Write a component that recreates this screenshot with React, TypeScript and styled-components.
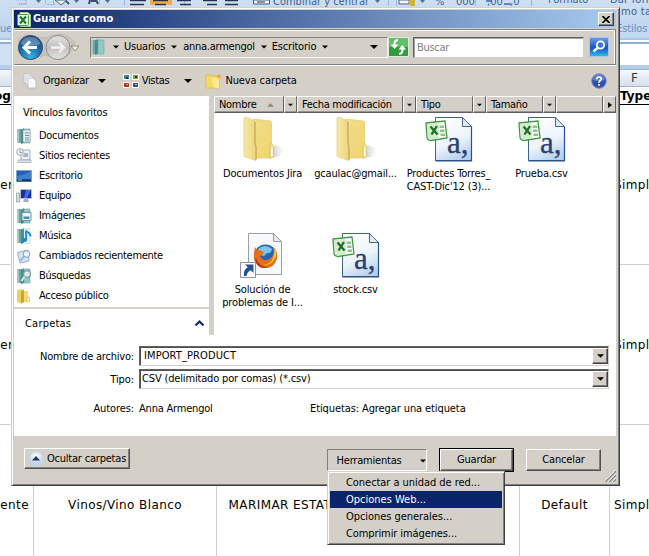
import React from "react";
import styled, { createGlobalStyle } from "styled-components";

const Global = createGlobalStyle`
  * { box-sizing: border-box; }
  html, body { margin: 0; padding: 0; overflow: hidden; }
  body {
    font-family: "DejaVu Sans Condensed", "DejaVu Sans", sans-serif;
    font-stretch: condensed;
    font-size: 11px;
    line-height: 14px;
    color: #000;
  }
  svg { display: block; flex: none; }
`;

const face = "#d4d0c8";

/* ---------- text ---------- */
const Text = styled.span<{ $track?: number; $bold?: boolean; $color?: string; $ml?: number }>`
  white-space: pre;
  letter-spacing: ${(p) => p.$track ?? -0.1}px;
  font-weight: ${(p) => (p.$bold ? 700 : 400)};
  color: ${(p) => p.$color ?? "inherit"};
  margin-left: ${(p) => p.$ml ?? 0}px;
`;

/* ---------- spreadsheet behind the dialog ---------- */
const Screen = styled.div`
  position: relative;
  width: 649px;
  height: 556px;
  overflow: hidden;
  background: #fff;
  display: flex;
  flex-direction: column;
`;

const Ribbon = styled.div`
  flex: none;
  height: 40px;
  background: linear-gradient(#cfdff3, #c3d8f0 60%, #c1d9f1 92%, #9fc0e6);
  color: #3e5e93;
  display: grid;
  grid-template-columns: 1fr 106px;
  overflow: hidden;
`;

const RibbonTools = styled.div`
  display: flex;
  height: 9px;
  overflow: hidden;
  position: relative;
`;

const RibbonCaption = styled.div`
  position: absolute;
  left: 0;
  top: 22px;
  color: #6b8fc0;
`;

const RibbonStyles = styled.div`
  display: grid;
  grid-template-columns: 63px 43px;
  grid-template-rows: 12px 17px 16px;
  margin-top: -7px;
  line-height: 14px;
  white-space: nowrap;
`;

const FormulaBar = styled.div`
  flex: none;
  height: 27px;
  margin-top: 2px;
  border-top: 2px solid #8db0dc;
  border-bottom: 4px solid #b5cdec;
  background: linear-gradient(90deg, #cfe0f5 0 11px, #fff 11px);
`;

const ColumnHeads = styled.div`
  flex: none;
  height: 18px;
  display: grid;
  grid-template-columns: 609px 40px;
  background: linear-gradient(#f5f8fc, #d5dfec);
  border-top: 1px solid #9eb6ce;
  border-bottom: 1px solid #9eb6ce;
  font: 12px/16px "DejaVu Sans", sans-serif;
  color: #27413e;
  & > :last-child { padding-left: 22px; }
`;

const SheetRow = styled.div<{ $head?: boolean }>`
  flex: none;
  height: ${(p) => (p.$head ? 18 : 160)}px;
  display: grid;
  grid-template-columns: 34px 183px 303px 90px 60px;
  border-bottom: 1px solid ${(p) => (p.$head ? "#000" : "#d0d0d4")};
  font: ${(p) => (p.$head ? "bold 12px" : "12px")} "DejaVu Sans", sans-serif;
  letter-spacing: ${(p) => (p.$head ? 0 : 0.4)}px;
`;

const Cell = styled.div<{ $align?: string; $pad?: number; $shift?: number }>`
  display: flex;
  align-items: center;
  justify-content: ${(p) => p.$align ?? "center"};
  padding-left: ${(p) => p.$pad ?? 0}px;
  padding-right: ${(p) => p.$shift ?? 0}px;
  border-right: 1px solid #d0d0d4;
  white-space: nowrap;
  overflow: hidden;
`;

const CutOff = styled.span`
  margin-left: -6px;
`;

/* ---------- dialog ---------- */
const Dialog = styled.div`
  position: absolute;
  left: 11px;
  top: 7px;
  width: 609px;
  height: 479px;
  background: ${face};
  border: 1px solid;
  border-color: ${face} #404040 #404040 ${face};
  box-shadow: inset 1px 1px #fff, inset -1px -1px #808080;
  padding: 2px 3px 2px 2px;
  display: flex;
  flex-direction: column;
`;

const TitleBar = styled.div`
  flex: none;
  height: 18px;
  display: flex;
  align-items: center;
  padding: 0 2px 0 3px;
  background: linear-gradient(90deg, #0a246a, #a6caf0);
`;

const CloseButton = styled.button`
  margin-left: auto;
  width: 16px;
  height: 14px;
  padding: 0;
  display: grid;
  place-items: center;
  background: ${face};
  border: 1px solid;
  border-color: #fff #404040 #404040 #fff;
  box-shadow: inset -1px -1px #808080;
`;

const NavBar = styled.div`
  flex: none;
  height: 36px;
  margin-top: 1px;
  display: flex;
  align-items: center;
  border: 1px solid;
  border-color: #808080 #808080 #808080 #d4d0c8;
  box-shadow: inset 0 1px #fff, 0 1px #fff, inset -1px 0 #fff;
  padding-left: 2px;
`;

const AddressBar = styled.div`
  width: 298px;
  height: 21px;
  margin-left: 10px;
  display: flex;
  align-items: center;
  border: 1px solid;
  border-color: #808080 #f4f2ee #f4f2ee #808080;
  & > svg:first-child { margin-left: -1px; }
  & > svg + svg { margin-left: 7px; }
`;

const SearchField = styled.div`
  width: 171px;
  height: 21px;
  margin-left: 4px;
  padding: 3px 0 0 3px;
  background: #fff;
  border: 1px solid;
  border-color: #606060 ${face} ${face} #606060;
  box-shadow: inset 1px 1px #a0a0a0;
  color: #808080;
`;

const Toolbar = styled.div`
  flex: none;
  height: 31px;
  display: flex;
  align-items: center;
  padding: 0 9px 0 9px;
`;

const HelpSlot = styled.div`
  margin-left: auto;
`;

const Panes = styled.div`
  flex: none;
  height: 239px;
  display: grid;
  grid-template-columns: 195px 5px 1fr;
`;

const Sidebar = styled.div`
  background: #fff;
  display: flex;
  flex-direction: column;
  padding-top: 10px;
`;

const LinkRow = styled.div`
  height: 20px;
  display: flex;
  align-items: center;
  padding-left: 2px;
  & > svg { margin-right: 7px; }
`;

const LinksTitle = styled.div`
  height: 20px;
  padding-left: 9px;
`;

const FoldersBar = styled.div`
  margin-top: auto;
  height: 28px;
  padding: 8px 4px 0 11px;
  display: flex;
  justify-content: space-between;
  border-top: 2px solid ${face};
`;

const Listing = styled.div`
  background: #fff;
  display: flex;
  flex-direction: column;
`;

const HeaderRow = styled.div`
  flex: none;
  height: 17px;
  display: grid;
  grid-template-columns: 70px 13px 106px 13px 57px 13px 57px 13px 47px 13px;
`;

const HeadCell = styled.div<{ $menu?: boolean }>`
  display: flex;
  align-items: center;
  justify-content: ${(p) => (p.$menu ? "center" : "flex-start")};
  padding-left: ${(p) => (p.$menu ? 0 : 4)}px;
  padding-top: 1px;
  background: ${face};
  border: 1px solid;
  border-color: #fff #606060 #606060 #fff;
  box-shadow: inset 0 -1px #9a9790;
  & > span + svg { margin-left: 10px; }
`;

const Files = styled.div`
  display: grid;
  grid-template-columns: repeat(4, 93px);
  grid-template-rows: 116px 100px;
  padding: 3px 0 0 2px;
`;

const FileItem = styled.div`
  display: flex;
  flex-direction: column;
  align-items: center;
  text-align: center;
  line-height: 13px;
  & > svg { margin-bottom: 3px; }
`;

const Fields = styled.div`
  flex: none;
  height: 101px;
  background: #fff;
  display: grid;
  grid-template-columns: 120px 470px;
  grid-template-rows: 23px 25px 29px;
  column-gap: 5px;
  padding-top: 11px;
`;

const FieldLabel = styled.div<{ $top?: number }>`
  text-align: right;
  padding-top: ${(p) => p.$top ?? 4}px;
`;

const Combo = styled.div<{ $pad: number }>`
  height: 20px;
  display: flex;
  align-items: center;
  justify-content: space-between;
  padding-left: ${(p) => p.$pad}px;
  border: 1px solid;
  border-color: #606060 ${face} ${face} #606060;
  box-shadow: inset 1px 1px #505050;
`;

const ComboButton = styled.div`
  width: 16px;
  height: 16px;
  display: grid;
  place-items: center;
  background: ${face};
  border: 1px solid;
  border-color: #fff #404040 #404040 #fff;
  box-shadow: inset -1px -1px #808080;
`;

const Meta = styled.div`
  display: grid;
  grid-template-columns: 171px 1fr;
  align-items: center;
`;

const Footer = styled.div`
  flex: 1;
  position: relative;
  display: flex;
  align-items: flex-start;
  padding: 12px 0 0 10px;
`;

const Button = styled.button<{ $w: number; $h?: number; $ml?: number; $mt?: number; $default?: boolean; $pressed?: boolean }>`
  width: ${(p) => p.$w}px;
  height: ${(p) => p.$h ?? 22}px;
  margin: ${(p) => p.$mt ?? 1}px 0 0 ${(p) => p.$ml ?? 0}px;
  padding: ${(p) => (p.$pressed ? "2px 0 0" : 0)};
  display: flex;
  align-items: center;
  justify-content: center;
  font: inherit;
  color: #000;
  background: ${face};
  border: 1px solid;
  border-color: ${(p) => (p.$pressed ? "#808080 #fff #fff #808080" : "#fff #505050 #505050 #fff")};
  box-shadow: ${(p) => (p.$pressed ? "none" : "inset -1px -1px #808080")};
  outline: ${(p) => (p.$default ? "1px solid #000" : "none")};
`;

const Grip = styled.div`
  position: absolute;
  right: 0;
  bottom: 1px;
`;

const Menu = styled.div`
  position: absolute;
  left: 327px;
  top: 471px;
  width: 178px;
  height: 74px;
  padding: 2px;
  background: ${face};
  border: 1px solid;
  border-color: ${face} #404040 #404040 ${face};
  box-shadow: inset 1px 1px #fff, inset -1px -1px #808080;
`;

const MenuItem = styled.div<{ $active?: boolean }>`
  height: 17px;
  padding: 1px 0 0 16px;
  line-height: 15px;
  background: ${(p) => (p.$active ? "#0a246a" : "transparent")};
  color: ${(p) => (p.$active ? "#fff" : "#000")};
`;

/* ---------- icons ---------- */
const Down = ({ w = 7, c = "#000" }: { w?: number; c?: string }) => (
  <svg width={w} height={4} viewBox="0 0 8 4"><path d="M0 0h8L4 4z" fill={c} /></svg>
);

const ExcelIcon = () => (
  <svg width="14" height="15" viewBox="0 0 14 15">
    <path d="M3 .5h8l2.500 2.500v11.500H3z" fill="#f2faf0" stroke="#a5cf9e" />
    <rect x=".5" y="2.500" width="11" height="11" rx="1" fill="#e6f3e2" stroke="#4c9a48" />
    <path d="M3 4.500 9 11.500M9 4.500 3 11.500" stroke="#1f7a2e" strokeWidth="2.200" />
  </svg>
);

const NavArrows = () => (
  <svg width="63" height="28" viewBox="0 0 63 28">
    <defs>
      <radialGradient id="back" cx=".5" cy=".9" r=".9">
        <stop offset="0" stopColor="#35b5ea" /><stop offset=".5" stopColor="#1b6fae" /><stop offset="1" stopColor="#0f3c78" />
      </radialGradient>
      <linearGradient id="fwd" x2="0" y2="1">
        <stop offset="0" stopColor="#e4e3e1" /><stop offset=".5" stopColor="#c2c1bf" /><stop offset="1" stopColor="#e4e3e0" />
      </linearGradient>
    </defs>
    <path d="M2 7Q6 1 13 2Q22 5 30 5Q35 1 44 1Q52 2 58 10L53 20Q48 27 41 26L28 22L13 27Q4 26 1 18Z" fill="#c6c4bf" stroke="#b2b0ab" strokeWidth=".6" />
    <circle cx="13.500" cy="14.500" r="12" fill="url(#back)" stroke="#34516f" />
    <path d="M3.500 11a10.500 10.500 0 0 1 20 0Q13 15 3.500 11z" fill="#fff" opacity=".3" />
    <path d="M13 8.500 7 14.500l6 6M8 14.500h12" fill="none" stroke="#fff" strokeWidth="3" />
    <circle cx="41" cy="14.500" r="12" fill="url(#fwd)" stroke="#8e8e8e" />
    <path d="M42 9.500l5 5-5 5M34 14.500h12" fill="none" stroke="#f0f0f0" strokeWidth="2.400" />
    <path d="M54 13h8l-4 5z" fill="#f2f1ef" stroke="#77756f" strokeWidth=".8" />
  </svg>
);

const Binder = ({ kind }: { kind?: string }) => (
  <svg width={16} height={16} viewBox="0 0 16 16">
    <path d="M1 1h5v14H1z" fill="#6ba69e" />
    <path d="M1 1h2v14H1z" fill="#a3c8c1" />
    <path d="M5 2l3-2v15l-3 1z" fill="#468d88" />
    <path d="M8 1h6v14H8z" fill="#93c8c8" stroke="#6fa3a5" strokeWidth=".6" />
    {kind === "doc" && <><path d="M7 2h7v12H7z" fill="#e6f0f5" stroke="#7f9fae" strokeWidth=".6" /><path d="M9 5h4M9 7.500h4M9 10h4M9 12h4" stroke="#6b93a8" /></>}
    {kind === "image" && <><path d="M6 4.500h9v8H6z" fill="#eef6fa" stroke="#6f97a5" /><path d="M7.500 8.500h6v2.500h-6z" fill="#3f92b8" /></>}
    {kind === "music" && <><path d="M8 1h7v14H8z" fill="#e2f0f6" /><path d="M10 12V2.500c1 2.500 5 2 4.500 6" fill="none" stroke="#1688d8" strokeWidth="1.800" /><ellipse cx="8.700" cy="12" rx="2.300" ry="1.900" fill="#1688d8" /></>}
    {kind === "search" && <><circle cx="11" cy="6" r="3.400" fill="#deedf5" stroke="#7295b5" strokeWidth="1.200" /><path d="M8.500 8.500 5.500 13" stroke="#d8e4f0" strokeWidth="2" /></>}
  </svg>
);

const RecentIcon = () => (
  <svg width="16" height="16" viewBox="0 0 16 16">
    <path d="M5 2h9v10H5z" fill="#edf1f5" stroke="#a5afb9" /><path d="M2 12h13v2.500H2z" fill="#dde3e9" stroke="#a0a8b0" strokeWidth=".7" />
    <path d="M8 5h4v4H7z" fill="#9fb6cb" /><circle cx="4" cy="4" r="3.300" fill="#f6f8fa" stroke="#9ca8a8" /><path d="M4 2v2.500h2" fill="none" stroke="#777" strokeWidth=".8" />
  </svg>
);
const DesktopIcon = () => (
  <svg width="16" height="16" viewBox="0 0 16 16">
    <path d="M.5 2.500h15v11H.5z" fill="#275fb5" stroke="#7da2c8" /><path d="M1 8Q9 7 15 3v8H1z" fill="#4a8dd4" opacity=".7" /><path d="M1 11.500h14v2H1z" fill="#17345f" /><path d="M2 12h4" stroke="#7fd2a0" />
  </svg>
);
const ComputerIcon = () => (
  <svg width="16" height="16" viewBox="0 0 16 16">
    <path d="M4.500 1.500h11v9h-11z" fill="#1a2ea5" stroke="#b7bec8" /><path d="M10 2h5L11 10H8z" fill="#3d6be0" /><path d="M8 11h4l1 3H7z" fill="#a9afb8" /><path d="M.5 5h3v9h-3z" fill="#d9dde2" stroke="#8b929b" strokeWidth=".7" />
  </svg>
);
const ChangedIcon = () => (
  <svg width="16" height="16" viewBox="0 0 16 16">
    <path d="M1.500 4.500 12 2l1 11-9 2z" fill="#d3e3f5" stroke="#93afd2" /><circle cx="10.500" cy="6" r="3.300" fill="#edf5fc" stroke="#7f9cc4" /><path d="M8 8.500 4.500 12.500" stroke="#8ba8ce" strokeWidth="1.600" />
  </svg>
);
const SmallFolder = () => (
  <svg width="16" height="16" viewBox="0 0 16 16">
    <path d="M1 2l5-1 2 1v12l-3 1.500L1 14z" fill="#ecd062" /><path d="M5 3l3-1v12l-3 1.500z" fill="#c9a632" /><path d="M8 3h4v11H8z" fill="#f2d976" /><path d="M11 9h2.500v5H11z" fill="#f9eeb6" stroke="#d4b451" strokeWidth=".5" />
  </svg>
);
const OrganizeIcon = () => (
  <svg width="15" height="16" viewBox="0 0 15 16">
    <g fill="#f8fafc" stroke="#b5bbc3" strokeWidth=".8"><path d="M1 1h7v9H1z" /><path d="M3 3h7v9H3z" /><path d="M5 5h5l3 3v7H5z" /></g>
  </svg>
);
const ViewsIcon = () => (
  <svg width="16" height="14" viewBox="0 0 16 14">
    <g fill="#fff"><path d="M0 0h7v6H0zM9 0h7v6H9zM0 8h7v6H0zM9 8h7v6H9z" /></g>
    <path d="M1 1h5v4H1z" fill="#2d8d91" /><path d="M10 1h5v4h-5z" fill="#76a72f" /><path d="M1 9h5v4H1z" fill="#b03428" /><path d="M10 9h5v4h-5z" fill="#3f4e8e" /><path d="M3 3h2v2H3zM12 2h2v2h-2z" fill="#243c2f" /><path d="M3 10h2v1H3zM12 10h2v1h-2z" fill="#e6b15b" />
  </svg>
);
const NewFolderIcon = () => (
  <svg width="17" height="16" viewBox="0 0 17 16">
    <path d="M1 2h5l1 1h7v12H1z" fill="#f5d967" stroke="#d9b440" strokeWidth=".7" /><path d="M6 5h8v10H9z" fill="#fbe891" /><path d="M14 1v5M11.500 3.500h5M12.300 1.800l3.400 3.400M15.700 1.800l-3.400 3.400" stroke="#efa42a" strokeWidth=".8" />
  </svg>
);
const RefreshIcon = () => (
  <svg width="21" height="20" viewBox="0 0 21 20">
    <path d="M.5.500h20v19H.500z" fill="#2f9d3c" stroke="#dcebdc" /><path d="M1 1h19v9H1z" fill="#62bd68" />
    <path d="M10 3Q6 3.500 6.500 8" fill="none" stroke="#fff" strokeWidth="2" />
    <path d="M2.800 7.500h7.600L6.600 12z" fill="#fff" />
    <path d="M11 17Q15 16.500 14.500 12" fill="none" stroke="#fff" strokeWidth="2" />
    <path d="M10.600 12.500h7.600L14.400 8z" fill="#fff" />
  </svg>
);
const SearchIcon = () => (
  <svg width="20" height="20" viewBox="0 0 20 20">
    <defs><linearGradient id="sg" x2="0" y2="1"><stop offset="0" stopColor="#6aa0e8" /><stop offset=".55" stopColor="#1e4fc0" /><stop offset="1" stopColor="#25c4ee" /></linearGradient></defs>
    <rect x=".5" y=".5" width="19" height="19" rx="1" fill="url(#sg)" stroke="#a9c5ec" />
    <circle cx="11.500" cy="8" r="3.700" fill="#3a78dc" stroke="#fff" strokeWidth="1.800" /><path d="M9 10.500 4.500 14.500" stroke="#fff" strokeWidth="2.400" />
  </svg>
);
const HelpIcon = () => (
  <svg width="16" height="16" viewBox="0 0 16 16">
    <circle cx="8" cy="8" r="7.300" fill="#2f52ae" stroke="#7e90c4" /><path d="M2 7a6 6 0 0 1 12 0Q8 9 2 7z" fill="#7f9ee0" opacity=".6" />
    <path d="M5.700 6.200c0-3 4.800-2.800 4.600-.2C10.200 7.600 8 7.500 8 9.700M8 11v1.700" fill="none" stroke="#fff" strokeWidth="1.700" />
  </svg>
);

const FolderIcon = () => (
  <svg width="48" height="48" viewBox="0 0 48 48">
    <defs>
      <linearGradient id="fl" x2="1"><stop offset="0" stopColor="#f8e9a6" /><stop offset="1" stopColor="#ecd47c" /></linearGradient>
      <linearGradient id="fr" x2="1" y2="1"><stop offset="0" stopColor="#eedc90" /><stop offset="1" stopColor="#f3d56a" /></linearGradient>
      <linearGradient id="fs" x2="1"><stop offset="0" stopColor="#888" stopOpacity=".55" /><stop offset="1" stopColor="#bbb" stopOpacity="0" /></linearGradient>
    </defs>
    <path d="M30 42l6-13 10 4-7 8z" fill="url(#fs)" />
    <path d="M14 3l17 2q1.500 0 1.500 1.500V42H17z" fill="url(#fr)" stroke="#e0c564" strokeWidth=".6" />
    <path d="M5 2.500q0-2 3-1l8 4v22l1 2v15L7 41q-2 0-2-2z" fill="url(#fl)" stroke="#dcc267" strokeWidth=".6" />
    <path d="M16 6v22l1 2v14" fill="none" stroke="#b99937" strokeWidth=".8" />
    <path d="M31 31l1.500-4 2 3v10l-1.500 2h-2z" fill="#f7e9a6" stroke="#d0b450" strokeWidth=".6" /><path d="M32.700 33v7" stroke="#fff" strokeWidth="1.400" />
  </svg>
);

const CsvIcon = () => (
  <svg width="48" height="48" viewBox="0 0 48 48">
    <defs><linearGradient id="pg" x1=".3" x2=".7" y2="1"><stop offset="0" stopColor="#fff" /><stop offset=".55" stopColor="#edf4fc" /><stop offset="1" stopColor="#b4cfee" /></linearGradient></defs>
    <path d="M10.500 1.500h27l9 9v34h-36z" fill="url(#pg)" stroke="#3e6291" />
    <path d="M10.500 44.800h36V10" fill="none" stroke="#28508c" strokeWidth="1.200" />
    <path d="M37.500 1.500v9h9z" fill="#dfeaf7" stroke="#46699a" />
    <text x="22" y="37" fontFamily="Liberation Serif, serif" fontSize="31" fill="#2c3f6e" stroke="#2c3f6e" strokeWidth=".3">a,</text>
    <path d="M1 7l19-2 2 17-16 2.500q-4-.5-4-3.500z" fill="#fff" stroke="#3b9a3c" strokeWidth="1.300" />
    <path d="M2 8l12-1.500v16l-9 1-2-2z" fill="#d3ecca" />
    <path d="M14.500 9.500h4.500v2.500h-4.500zM15 13.500h4.500V16H15zM15.500 17.500H20V20h-4.500z" fill="#8cc683" />
    <path d="M5.500 10.500l7 8M12 10l-5.500 8.500" stroke="#1e6d29" strokeWidth="2.300" />
  </svg>
);

const FirefoxIcon = () => (
  <svg width="48" height="48" viewBox="1 1 48 48">
    <path d="M10.500 2.500h25l8 8v33h-33z" fill="#f7f8f9" stroke="#9b9fa3" /><path d="M35.500 2.500v8h8z" fill="#e5e7e9" stroke="#9b9fa3" />
    <circle cx="27.500" cy="25" r="11.500" fill="#2765b4" /><path d="M20 18q7-6 14 0-1 5-5 4l-3 3-6-2z" fill="#7cc6ee" />
    <path d="M17 16q1 3 4 3l5 2q-1 3-4 4 2 5 7 4 6-2 7-7l-1-6q5 5 4 11-3 11-13 10-10-2-10-11 0-6 1-10z" fill="#e66f17" />
    <path d="M37 17q3 7-1 12-4 6-11 5 8-1 10-7z" fill="#f8c53b" /><path d="M18 27q3 9 12 9-9 4-13-7z" fill="#b93716" />
    <path d="M2.500 31.500h15v15h-15z" fill="#fff" stroke="#8a94a0" />
    <path d="M7 33.500h8.500V42l-2.800-2.800Q9 41 8.500 45H6q-1-6 3.800-8.800z" fill="#205296" />
  </svg>
);

const UpBadge = () => (
  <svg width="16" height="16" viewBox="0 0 16 16">
    <defs><radialGradient id="ub" cy=".3"><stop offset="0" stopColor="#fff" /><stop offset="1" stopColor="#c3d4e8" /></radialGradient></defs>
    <circle cx="8" cy="8" r="7.500" fill="url(#ub)" stroke="#c8d4e2" /><path d="M4 9.500l4-4.500L12 9.500z" fill="#1f3260" />
  </svg>
);

const RibbonGlyphs = () => (
  <svg width="543" height="9" viewBox="0 0 543 9">
    <g stroke="#a2bce0"><path d="M45.500 0v4M53.500 0v4M99.500 0v4M124.500 0v6M184.500 0v6M47 4.500h8" /></g>
    <path d="M16 0h10v4H16M20 4h8" stroke="#93a7c2" fill="none" strokeDasharray="1 1" />
    <path d="M55 0l6 5 6-5z" fill="#e8eef6" stroke="#4b5f85" /><path d="M66 1l3 3" stroke="#445577" strokeWidth="2" />
    <path d="M89 4l1-4M98 4l-2-4M91 1h5" stroke="#3e4c6c" strokeWidth="2" />
    <path d="M150 0h22v5h-22z" fill="#f5a94b" />
    <path d="M130 .500h16M130 4.500h14M153 .500h15M155 4.500h11M177 .500h14M180 4.500h11M203 .500h14M207 4.500h10M225 .500h13M225 4.500h13" stroke="#26334e" strokeWidth="1.300" />
    <path d="M253.500 0h16v4h-16z" fill="#eef4fb" stroke="#495a78" /><path d="M257 2h8" stroke="#26334e" />
    <path d="M399 0h10v4h-10z" fill="#f3f6fa" stroke="#4c6590" /><path d="M409 0h6v6h-5z" fill="#d6b32c" />
    <g fill="#526a94"><path d="M36 0h5l-2.500 3zM74 0h5l-2.500 3zM105 0h5l-2.500 3zM375 0h5l-2.500 3zM420 0h5l-2.500 3z" /></g>
    <path d="M504 4h7M486 1h6" stroke="#3d6bb5" strokeWidth="1.300" />
    <path d="M388.500 0v6M396.500 0v6M475.500 0v6M531.500 0v6" stroke="#9bb8de" />
  </svg>
);

const RibbonLabel = styled.span<{ $x: number }>`
  position: absolute;
  left: ${(p) => p.$x}px;
  top: -5px;
  white-space: nowrap;
`;

const links: [React.ReactNode, string][] = [
  [<Binder kind="doc" />, "Documentos"],
  [<RecentIcon />, "Sitios recientes"],
  [<DesktopIcon />, "Escritorio"],
  [<ComputerIcon />, "Equipo"],
  [<Binder kind="image" />, "Imágenes"],
  [<Binder kind="music" />, "Música"],
  [<ChangedIcon />, "Cambiados recientemente"],
  [<Binder kind="search" />, "Búsquedas"],
  [<SmallFolder />, "Acceso público"],
];

const files: [React.ReactNode, string[]][] = [
  [<FolderIcon />, ["Documentos Jira"]],
  [<FolderIcon />, ["gcaulac@gmail..."]],
  [<CsvIcon />, ["Productes Torres_", "CAST-Dic'12 (3)..."]],
  [<CsvIcon />, ["Prueba.csv"]],
  [<FirefoxIcon />, ["Solución de", "problemas de I..."]],
  [<CsvIcon />, ["stock.csv"]],
];

const columns = ["Nombre", "Fecha modificación", "Tipo", "Tamaño"];

const rows: [string, string, string][] = [
  ["", "", ""],
  ["", "", ""],
  ["Vinos/Vino Blanco", "MARIMAR ESTATE VINEYARDS AND WINERY", "Default"],
];

export default function App() {
  return (
    <Screen>
      <Global />
      <Ribbon>
        <RibbonTools>
          <RibbonGlyphs />
          <RibbonLabel $x={273}>Combinar y centrar</RibbonLabel>
          <RibbonLabel $x={435}>%</RibbonLabel>
          <RibbonLabel $x={456}>000</RibbonLabel>
          <RibbonLabel $x={487}>,00</RibbonLabel>
          <RibbonLabel $x={510}>,0</RibbonLabel>
        </RibbonTools>
        <RibbonStyles>
          <Text $ml={5}>Formato</Text><Text $ml={4} $track={0.2}>Dar formato</Text>
          <i /><Text $ml={15} $track={0.3}>mo tabla</Text>
          <i /><Text $ml={10} $color="#6b8fc0">Estilos</Text>
        </RibbonStyles>
        <RibbonCaption>ue</RibbonCaption>
      </Ribbon>
      <FormulaBar />
      <ColumnHeads><span /><span>F</span></ColumnHeads>
      <SheetRow $head>
        <Cell $align="flex-start"><CutOff>og</CutOff></Cell><Cell /><Cell /><Cell /><Cell $align="flex-start" $pad={10}>Type</Cell>
      </SheetRow>
      {rows.map(([category, brand, set], r) => (
        <SheetRow key={r}>
          <Cell $align="flex-end" $shift={4}>ente</Cell>
          <Cell>{category}</Cell>
          <Cell $shift={7}>{brand}</Cell>
          <Cell>{set}</Cell>
          <Cell $align="flex-start" $pad={4}>Simple</Cell>
        </SheetRow>
      ))}

      <Dialog>
        <TitleBar>
          <ExcelIcon />
          <Text $bold $color="#fff" $ml={2} $track={0.15}>Guardar como</Text>
          <CloseButton aria-label="Cerrar">
            <svg width="8" height="7" viewBox="0 0 8 7"><path d="M.500 0l7 7M7.500 0l-7 7" stroke="#000" strokeWidth="1.600" /></svg>
          </CloseButton>
        </TitleBar>
        <NavBar>
          <NavArrows />
          <AddressBar>
            <Binder />
            <Down w={6} /><Text $ml={5} $track={-0.2}>Usuarios</Text>
            <Text $ml={6}><Down w={6} /></Text><Text $ml={6} $track={-0.25}>anna.armengol</Text>
            <Text $ml={6}><Down w={6} /></Text><Text $ml={5} $track={-0.2}>Escritorio</Text>
            <Text $ml={6}><Down w={6} /></Text>
            <Text $ml={42}><Down w={8} /></Text>
          </AddressBar>
          <RefreshIcon />
          <SearchField><Text $track={-0.3}>Buscar</Text></SearchField>
          <Text $ml={5}><SearchIcon /></Text>
        </NavBar>
        <Toolbar>
          <OrganizeIcon /><Text $ml={5} $track={-0.3}>Organizar</Text><Text $ml={9}><Down w={8} /></Text>
          <Text $ml={17}><ViewsIcon /></Text><Text $ml={3} $track={-0.3}>Vistas</Text><Text $ml={15}><Down w={8} /></Text>
          <Text $ml={13}><NewFolderIcon /></Text><Text $ml={3}>Nueva carpeta</Text>
          <HelpSlot><HelpIcon /></HelpSlot>
        </Toolbar>
        <Panes>
          <Sidebar>
            <LinksTitle><Text $track={-0.2}>Vínculos favoritos</Text></LinksTitle>
            {links.map(([icon, name]) => (
              <LinkRow key={name}>{icon}<Text $track={-0.3}>{name}</Text></LinkRow>
            ))}
            <FoldersBar>
              <Text $track={0.2}>Carpetas</Text>
              <svg width="11" height="14" viewBox="0 0 11 14"><path d="M1.500 8.500l4-4 4 4" fill="none" stroke="#12296f" strokeWidth="2.200" /></svg>
            </FoldersBar>
          </Sidebar>
          <i />
          <Listing>
            <HeaderRow>
              {columns.map((c, i) => (
                <React.Fragment key={c}>
                  <HeadCell>
                    <Text $track={-0.3}>{c}</Text>
                    {i === 0 && <svg width="7" height="4" viewBox="0 0 8 4"><path d="M0 4h8L4 0z" fill="#8a8880" /></svg>}
                  </HeadCell>
                  <HeadCell $menu><Down w={5} /></HeadCell>
                </React.Fragment>
              ))}
              <HeadCell />
              <HeadCell $menu><svg width="4" height="6" viewBox="0 0 4 6"><path d="M0 0v6l4-3z" /></svg></HeadCell>
            </HeaderRow>
            <Files>
              {files.map(([icon, lines]) => (
                <FileItem key={lines[0]}>{icon}{lines.map((l) => <Text key={l} $track={-0.15}>{l}</Text>)}</FileItem>
              ))}
            </Files>
          </Listing>
        </Panes>
        <Fields>
          <FieldLabel><Text $track={-0.2}>Nombre de archivo:</Text></FieldLabel>
          <Combo $pad={4}><Text $track={0.1}>IMPORT_PRODUCT</Text><ComboButton><Down /></ComboButton></Combo>
          <FieldLabel><Text>Tipo:</Text></FieldLabel>
          <Combo $pad={2}><Text $track={-0.16}>CSV (delimitado por comas) (*.csv)</Text><ComboButton><Down /></ComboButton></Combo>
          <FieldLabel $top={8}><Text>Autores:</Text></FieldLabel>
          <Meta><Text $track={-0.2}>Anna Armengol</Text><Text>Etiquetas: Agregar una etiqueta</Text></Meta>
        </Fields>
        <Footer>
          <Button $w={106} $h={21} $mt={0}><UpBadge /><Text $ml={3} $track={-0.2}>Ocultar carpetas</Text></Button>
          <Button $w={100} $ml={197} $pressed><Text $ml={8} $track={-0.2}>Herramientas</Text><Text $ml={18}><Down w={6} /></Text></Button>
          <Button $w={73} $ml={13} $default><Text $track={-0.2}>Guardar</Text></Button>
          <Button $w={75} $ml={13}><Text $track={-0.15}>Cancelar</Text></Button>
          <Grip>
            <svg width="12" height="12" viewBox="0 0 12 12"><path d="M1 12 12 1M5 12l7-7M9 12l3-3" stroke="#808080" strokeWidth="1.400" /><path d="M0 12 12 0M4 12l8-8M8 12l4-4" stroke="#fff" strokeWidth=".7" /></svg>
          </Grip>
        </Footer>
      </Dialog>
      <Menu>
        <MenuItem><Text $track={-0.05}>Conectar a unidad de red...</Text></MenuItem>
        <MenuItem $active><Text $track={0}>Opciones Web...</Text></MenuItem>
        <MenuItem><Text $track={-0.05}>Opciones generales...</Text></MenuItem>
        <MenuItem><Text $track={-0.1}>Comprimir imágenes...</Text></MenuItem>
      </Menu>
    </Screen>
  );
}
